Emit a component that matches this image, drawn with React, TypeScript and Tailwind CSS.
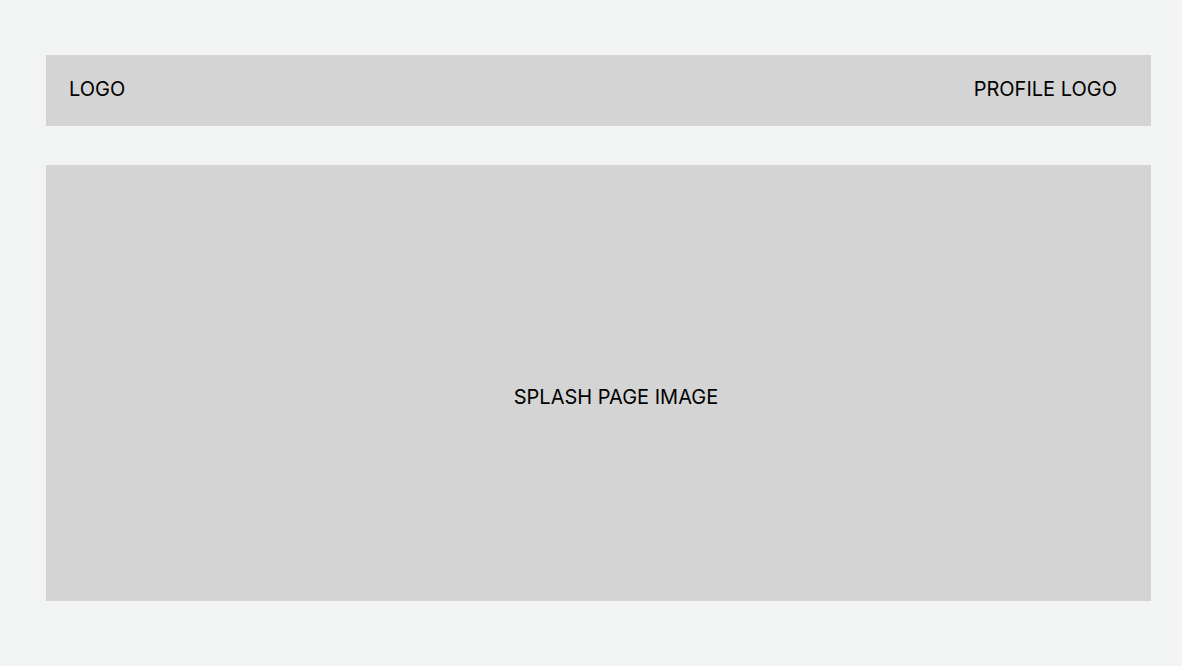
export default function App() {
  return (
    <div className="min-h-screen bg-[#f2f4f3] pt-[55px] pl-[46px] pr-[31px] font-['Inter',sans-serif] text-black">
      {/* Header */}
      <header className="flex h-[71px] items-center justify-between bg-[#d4d4d4] pl-[23px] pr-[34px] pb-[3px]">
        <span className="text-[20px] leading-none">LOGO</span>
        <span className="text-[20px] leading-none">PROFILE LOGO</span>
      </header>

      {/* Splash */}
      <section className="mt-[39px] flex h-[436px] items-center justify-center bg-[#d4d4d4] pl-[35px] pt-[28px]">
        <span className="text-[20px] leading-none">SPLASH PAGE IMAGE</span>
      </section>
    </div>
  )
}
